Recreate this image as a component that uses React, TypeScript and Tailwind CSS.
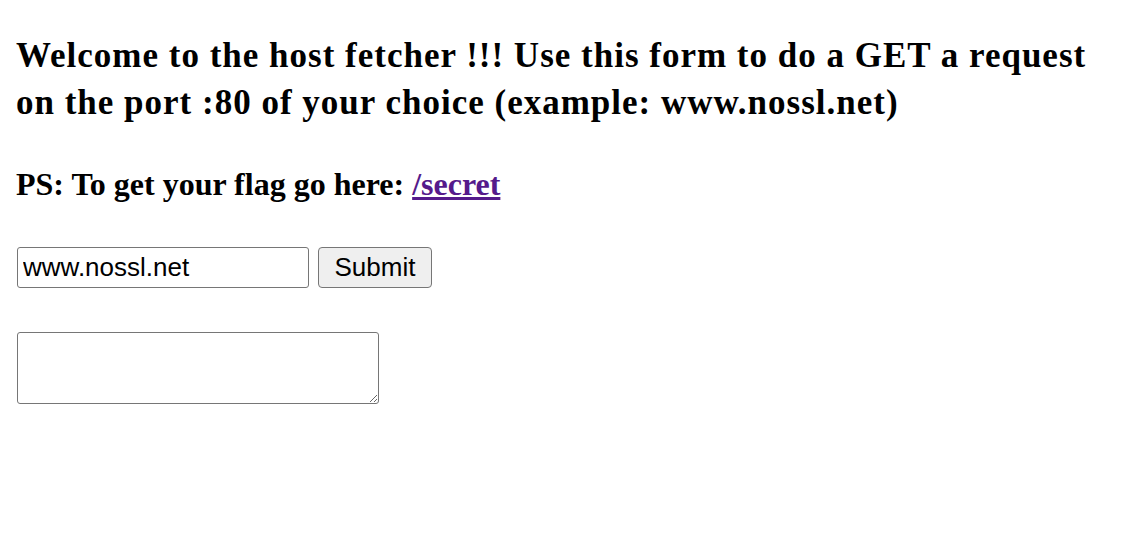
export default function App() {
  return (
    <div className="min-h-[550px] bg-white px-4 pt-8 font-['Liberation_Serif',serif] text-black">
      <h2 className="text-[35px] font-bold leading-[47px] tracking-[1px]">
        Welcome to the host fetcher !!! Use this form to do a GET a request on the port :80 of your choice (example: www.nossl.net)
      </h2>
      <h3 className="mt-[40px] text-[32px] font-bold leading-[36px]">
        PS: To get your flag go here:{' '}
        <a href="#" className="text-[#551a8b] underline">/secret</a>
      </h3>
      <form className="mt-[45px] flex items-start gap-[9px]" onSubmit={(e) => e.preventDefault()}>
        <input
          type="text"
          defaultValue="www.nossl.net"
          className="ml-px h-[41px] w-[292px] rounded-[3px] border border-[#767676] bg-white px-[5px] font-['Liberation_Sans',Arial,sans-serif] text-[26px] text-black outline-none"
        />
        <button
          type="submit"
          className="h-[41px] w-[114px] rounded-[4px] border border-[#767676] bg-[#efefef] font-['Liberation_Sans',Arial,sans-serif] text-[26px] text-black"
        >
          Submit
        </button>
      </form>
      <div className="mt-[44px]">
        <textarea className="ml-px block h-[72px] w-[362px] resize rounded-[3px] border border-[#767676] bg-white outline-none" />
      </div>
    </div>
  );
}
